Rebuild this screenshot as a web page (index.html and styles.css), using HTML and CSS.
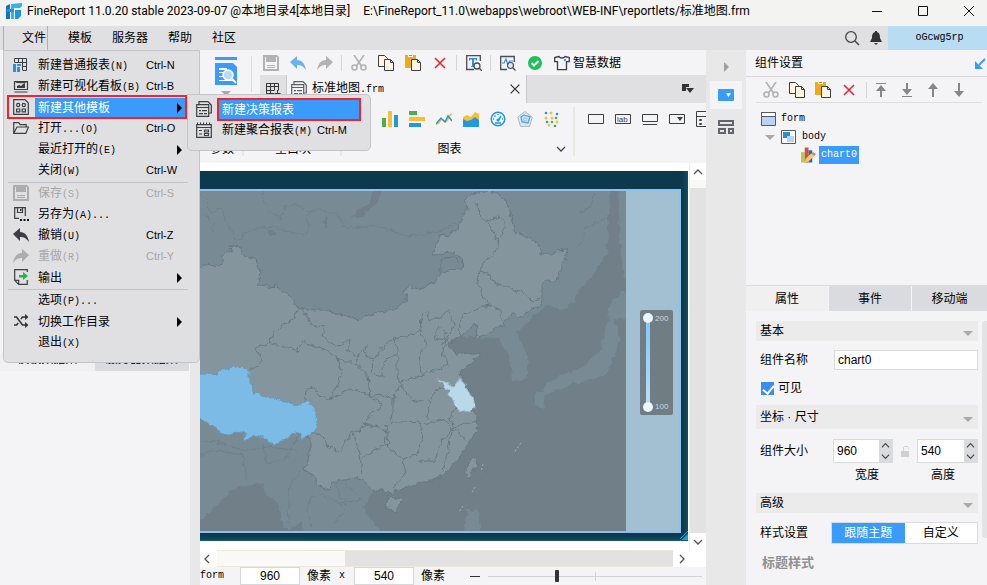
FILE: index.html
```html
<!DOCTYPE html>
<html lang="zh-CN">
<head>
<meta charset="utf-8">
<title>FineReport 11.0.20</title>
<link rel="stylesheet" href="styles.css">
</head>
<body>
<svg class="sprite" aria-hidden="true">
  <symbol id="save" viewBox="0 0 16 16"><path fill="currentColor" fill-rule="evenodd" d="M0 0h14l2 2v14H0zM2 2v12h12V2h-1v5H3V2z"/><path fill="currentColor" d="M8 2h3v3H8zM4 10h8v1H4zM4 12h8v1H4z"/></symbol>
  <symbol id="undo" viewBox="0 0 16 16"><path fill="currentColor" d="M7 1v4c5 0 8 4 9 10-3-4-5-5-9-5v4L0 7z"/></symbol>
  <symbol id="redo" viewBox="0 0 16 16"><path fill="currentColor" d="M9 1v4C4 5 1 9 0 15c3-4 5-5 9-5v4l7-7z"/></symbol>
  <symbol id="cut" viewBox="0 0 16 16"><g fill="none" stroke="currentColor" stroke-width="1.600"><path d="M3 0l7.500 11M13 0L5.500 11"/><circle cx="3.500" cy="12.500" r="2.500"/><circle cx="12.500" cy="12.500" r="2.500"/></g></symbol>
  <symbol id="copy" viewBox="0 0 16 16"><g fill="#fdf6e0" stroke="#3b3e43"><path d="M.5.500h6l3 3v8h-9z"/><path d="M6.500 4.500h6l3 3v8h-9z"/><path d="M12.500 4.500v3h3" fill="none"/></g></symbol>
  <symbol id="paste" viewBox="0 0 16 16"><path fill="#f2a918" d="M0 0h11v13H0z"/><path fill="#fff" d="M3 0h5v2H3z"/><path fill="#d9822b" d="M4 0h3v1H4z"/><path fill="#fdf6e0" stroke="#3b3e43" d="M6.500 4.500h6l3 3v8h-9z"/><path fill="none" stroke="#3b3e43" d="M12.500 4.500v3h3"/></symbol>
  <symbol id="cross" viewBox="0 0 16 16"><path fill="none" stroke="currentColor" stroke-width="1.500" d="M3 3l10 10M13 3L3 13"/></symbol>
  <symbol id="find" viewBox="0 0 16 16"><path fill="none" stroke="#4a4d55" stroke-width="1.300" d="M8 14.500H.7V.7h13.600V6M13 13l3 3"/><path fill="#2f8fe8" d="M3 3h8v2.500h-1V4.500H8V11H9v1H5v-1h1V4.500H4v1H3z"/><circle cx="11" cy="11" r="3" fill="#f4f4f7" stroke="#4a4d55" stroke-width="1.300"/></symbol>
  <symbol id="monitor" viewBox="0 0 16 16"><path fill="none" stroke="#4a4d55" stroke-width="1.300" d="M7 14.500H.7V1.500h13.600V7M13 13l2.500 2.500"/><path fill="none" stroke="#2f8fe8" stroke-width="1.200" d="M2 8h2l2-4 2 6 1.500-4H13"/><circle cx="10.500" cy="10.500" r="3" fill="#dcebf8" stroke="#4a4d55" stroke-width="1.200"/></symbol>
  <symbol id="ok" viewBox="0 0 16 16"><circle cx="8" cy="8" r="7" fill="#1fbf5c"/><path fill="none" stroke="#fff" stroke-width="2" d="M4.500 8l2.500 2.500L11.500 6"/></symbol>
  <symbol id="shirt" viewBox="0 0 16 16"><path fill="none" stroke="#3b3e43" stroke-width="1.300" d="M5 1.500L.7 2.500v4.200H3.500v8h9V6.700h2.800V2.500L11 1.500C10 3.500 6 3.500 5 1.500z"/><path fill="#3a9bfa" d="M10 4h2v2h-2z"/></symbol>
  <symbol id="table" viewBox="0 0 16 16"><path fill="none" stroke="currentColor" d="M1.500 2.500h12v7M1.500 2.500v10H9M1.500 5.500h12M1.500 9.500h8M5.500 2.500v10M9.500 2.500V9M12.500 9v6M9.500 12.500h6"/></symbol>
  <symbol id="newreport" viewBox="0 0 16 16"><path fill="none" stroke="#3b3e43" d="M1.500 5V1.500h12V13.500H10M1.500 5.500h12M5.500 1.500v4M9.500 1.500v12M9 9.500h4.500"/><path fill="#2391e6" d="M0 7h3v8H0zM4 7h4v2H4zM4 10h3v5H4z"/></symbol>
  <symbol id="board" viewBox="0 0 16 16"><path fill="none" stroke="#3b3e43" stroke-width="1.200" d="M1.500 3.500h13v8h-13zM1.500 14h13M2 3.500c2 1.500 10 1.500 12 0"/><path fill="#3b3e43" d="M4 10V8l2-1 2 1 2-2 2-1v5z"/></symbol>
  <symbol id="other" viewBox="0 0 16 16"><path fill="none" stroke="#3b3e43" stroke-width="1.200" d="M.7.700H12L15.300 4v11.300H.7z"/><g fill="none" stroke="#3b3e43" stroke-width="1.200"><circle cx="5.200" cy="6" r="1.600"/><circle cx="10.800" cy="6" r="1.600"/><path d="M3.600 10h3.200v2.800H3.600zM9.200 10h3.200v2.800H9.200z"/></g></symbol>
  <symbol id="open" viewBox="0 0 16 16"><path fill="none" stroke="#3b3e43" stroke-width="1.200" d="M.7 13.300V2.700h5l1.500 2h6V7M.7 13.300L4 7h11.500l-2.700 6.300z"/></symbol>
  <symbol id="saveas" viewBox="0 0 16 16"><path fill="none" stroke="#3b3e43" stroke-width="1.200" d="M6 12.300H1.700V1.700h10.600V10M4.500 2v4.500h5V2"/><path fill="#3b3e43" d="M7 3h1.500v2H7z"/><path fill="#111" d="M7 13h2v2H7zM10.500 13h2v2h-2zM14 13h2v2h-2z"/></symbol>
  <symbol id="export" viewBox="0 0 16 16"><path fill="none" stroke="#3b3e43" stroke-width="1.200" d="M14.300 3V.7H1.700v10.600l4 4h8.600V11M1.700 11.300h4v4"/><path fill="#27b24a" d="M6 6h4V3l5 4-5 4V8.500H6z"/></symbol>
  <symbol id="shuffle" viewBox="0 0 16 16"><path fill="none" stroke="#333" stroke-width="1.600" d="M1 4h2.500l6 8H13M1 12h2.500l1.700-2M8 6l1.500-2H13"/><path fill="#333" d="M12 1l3.500 3L12 7zM12 9l3.500 3-3.500 3z"/></symbol>
  <symbol id="form" viewBox="0 0 16 16"><g fill="none" stroke="currentColor" stroke-width="1.200"><path d="M3 3.500V.7h9L15.300 4v8H13"/><path d="M.7 3.700h12v11.600H.7zM.7 6.500h12"/></g><path fill="currentColor" d="M3 9h2v1.300H3zM6 9h5v1.300H6zM3 12h4v1.300H3zM8 12h3v1.300H8z"/></symbol>
  <symbol id="aggregate" viewBox="0 0 16 16"><path fill="none" stroke="#3b3e43" stroke-width="1.200" d="M.7 2.700h14.600v12.600H.7zM.7 5.500h14.600"/><path stroke="#3b3e43" stroke-dasharray="1 2" stroke-width="2" d="M1 1.500h14"/><path fill="none" stroke="#3b3e43" stroke-width="1.100" d="M3 8.500h3M3 12h3M8.500 8h4v2h-4zM8.500 11.500h4v2h-4z"/></symbol>
  <symbol id="down" viewBox="0 0 10 10"><path fill="none" stroke="currentColor" stroke-width="1.300" d="M1 3l4 4 4-4"/></symbol>
  <symbol id="arrow" viewBox="0 0 16 16"><path fill="none" stroke="currentColor" stroke-width="2" d="M8 15V4"/><path fill="currentColor" d="M8 1l5 6H3z"/></symbol>
  <symbol id="arrowbar" viewBox="0 0 16 16"><path fill="none" stroke="currentColor" stroke-width="2" d="M8 15V6"/><path fill="currentColor" d="M8 3l5 6H3zM3 1h10v1H3z"/></symbol>
</svg>

<header class="titlebar">
  <svg class="logo" viewBox="0 0 16 16"><path fill="#1273c4" d="M0 3L4 1v15H0z"/><path fill="#35b4e8" d="M5 1l11-1v3L14 5H8v11H5z"/><path fill="#1b98dc" d="M9 7h6v6l-3 3H9zM1 6h7v3H1z"/></svg>
  <span>FineReport 11.0.20 stable 2023-09-07 @本地目录4[本地目录]</span>
  <span class="path">E:\FineReport_11.0\webapps\webroot\WEB-INF\reportlets/标准地图.frm</span>
  <div class="winbtns">
    <button aria-label="最小化"><svg viewBox="0 0 12 12"><path d="M1 6.500h10"/></svg></button>
    <button aria-label="最大化"><svg viewBox="0 0 12 12"><path d="M1.500 1.500h9v9h-9z"/></svg></button>
    <button aria-label="关闭"><svg viewBox="0 0 12 12"><path d="M1 1l10 10M11 1L1 11"/></svg></button>
  </div>
</header>

<nav class="menubar">
  <button class="current">文件</button>
  <button>模板</button>
  <button>服务器</button>
  <button>帮助</button>
  <button>社区</button>
  <div class="account">
    <svg class="i16" viewBox="0 0 16 16"><circle cx="7" cy="7" r="5.300" fill="none" stroke="#444" stroke-width="1.300"/><path stroke="#444" stroke-width="1.600" d="M11 11l4 4"/></svg>
    <svg class="i16 bell" viewBox="0 0 16 16"><path fill="#333" d="M7 1h2v1c3 1 3 4 3 6l2 4H2l2-4c0-2 0-5 3-6zM6 13h4l-2 2z"/></svg>
    <a class="user mono" href="#">oGcwg5rp</a>
  </div>
</nav>

<div class="workspace">
  <aside class="data">
    <div class="datatabs"><button>模板数据集</button><button class="off">服务器数据集</button></div>
  </aside>

  <main class="editor">
    <div class="head">
      <button class="preview" aria-label="预览">
        <svg viewBox="0 0 22 28"><path fill="#3a9bfa" d="M0 0h22v3H0zM0 6h18l4 4v18H0z"/><path fill="#fff" d="M4 11h8v2H4zM4 15h6v1H4zM4 19h5v1H4zM4 23h14v1H4z"/><circle cx="13" cy="18" r="5" fill="#b9dcf8" stroke="#fff" stroke-width="1.500"/><path stroke="#fff" stroke-width="2" d="M16 21l5 5"/></svg>
        <span class="tri"></span>
      </button>
      <div class="rows">
        <div class="tools">
          <button class="dim" aria-label="保存"><svg class="i16"><use href="#save"/></svg></button>
          <button class="blue" aria-label="撤销"><svg class="i16"><use href="#undo"/></svg></button>
          <button class="dim" aria-label="重做"><svg class="i16"><use href="#redo"/></svg></button>
          <i class="bar"></i>
          <button class="dim" aria-label="剪切"><svg class="i16"><use href="#cut"/></svg></button>
          <button aria-label="复制"><svg class="i16"><use href="#copy"/></svg></button>
          <button aria-label="粘贴"><svg class="i16"><use href="#paste"/></svg></button>
          <button class="red" aria-label="删除"><svg class="i16"><use href="#cross"/></svg></button>
          <i class="bar"></i>
          <button aria-label="查找"><svg class="i16"><use href="#find"/></svg></button>
          <i class="bar"></i>
          <button aria-label="监控"><svg class="i16"><use href="#monitor"/></svg></button>
          <button aria-label="校验"><svg class="i16"><use href="#ok"/></svg></button>
          <button class="smart"><svg class="i16"><use href="#shirt"/></svg>智慧数据</button>
        </div>
        <div class="filetabs">
          <button class="grid" aria-label="新建"><svg class="i16"><use href="#table"/></svg></button>
          <div class="file"><svg class="i16 formicon"><use href="#form"/></svg><span>标准地图<span class="mono">.frm</span></span>
            <button class="close" aria-label="关闭标签"><svg class="i16"><use href="#cross"/></svg></button></div>
          <button class="list" aria-label="标签列表"><svg viewBox="0 0 12 10"><path fill="#333" d="M0 0h7v3H4v4H0zM4 4h8L8 9z"/></svg></button>
        </div>
      </div>
    </div>
    <div class="ribbon">
      <div class="group g1"><div></div><span>参数</span></div>
      <div class="group g2"><div></div><span>空白块</span></div>
      <div class="group g3">
        <div class="charts">
          <svg viewBox="0 0 16 16"><path fill="#4cae4f" d="M0 7h4v9H0z"/><path fill="#fbc02d" d="M6 0h4v16H6z"/><path fill="#2196e3" d="M12 4h4v12h-4z"/></svg>
          <svg viewBox="0 0 16 16"><path fill="#4cae4f" d="M0 0h8v4H0z"/><path fill="#fbc02d" d="M0 6h16v4H0z"/><path fill="#2196e3" d="M0 12h12v4H0z"/></svg>
          <svg viewBox="0 0 16 16"><path fill="none" stroke="#fbc02d" stroke-width="1.500" d="M0 13c4 1 4-6 7-4s3 3 5-1 2-5 4-5"/><path fill="none" stroke="#2196e3" stroke-width="1.500" d="M0 13l5-6 4 4 3-6 4 5"/></svg>
          <svg viewBox="0 0 16 16"><path fill="#fbc02d" d="M0 6l4-2 4 2 4-5 4 2v8H0z"/><path fill="#2196e3" d="M0 8l4 2 4-1 4-3 4 3v7H0z"/></svg>
          <svg viewBox="0 0 16 16"><circle cx="8" cy="8" r="6.800" fill="#eef7ff" stroke="#2196e3" stroke-width="1.500"/><path fill="none" stroke="#2196e3" stroke-width="1.500" d="M8 10l3-5M5 12h6M3 8h1M12 8h1M8 3v1M4.500 4.500l1 1"/><circle cx="8" cy="9" r="1.500" fill="#2196e3"/></svg>
          <svg viewBox="0 0 16 16"><path fill="#e4e8ec" stroke="#aeb5bb" d="M8 .600l7.300 5.500-2.800 9.300h-9L.7 6.100z"/><path fill="#c4e3f9" stroke="#45aaf0" stroke-width="1.300" d="M7 4l6 2-2 6-6-1-1-5z"/><circle cx="8" cy="8.500" r="1.500" fill="#eee" stroke="#aeb5bb"/></svg>
          <svg viewBox="0 0 16 16"><g fill="#fbc02d"><circle cx="2" cy="7" r="1.500"/><circle cx="7" cy="2" r="1.500"/><circle cx="8" cy="7" r="1.500"/><circle cx="13" cy="11" r="1.500"/><circle cx="5" cy="14" r="1.500"/></g><g fill="#2196e3"><circle cx="2" cy="2" r="1.300"/><circle cx="13" cy="3" r="1.300"/><circle cx="3" cy="11" r="1.300"/><circle cx="11" cy="15" r="1.300"/></g><g fill="#4cae4f"><circle cx="12" cy="7" r="1.300"/><circle cx="8" cy="11" r="1.300"/></g></svg>
        </div>
        <span>图表</span>
        <button class="more" aria-label="更多图表"><svg viewBox="0 0 10 10"><use href="#down"/></svg></button>
      </div>
      <div class="group g4">
        <div class="widgets">
          <svg viewBox="0 0 16 12"><path d="M.5 1.500h15v9H.5z"/></svg>
          <svg viewBox="0 0 16 12"><path d="M.5 1.500h15v9H.5z"/><text x="2" y="9">lab</text></svg>
          <svg viewBox="0 0 16 12"><path d="M.5 1.500h15v7H.5zM1 11.500h14"/></svg>
          <svg viewBox="0 0 16 12"><path d="M.5 1.500h15v9H.5z"/><path class="solid" d="M8 4h6l-3 4z"/></svg>
          <svg class="tall" viewBox="0 0 16 16"><path d="M.5.500h15v15H.5zM.5 5.500h15M3.500 8.500h2v1h-2zM3.500 12.500h2v1h-2z"/></svg>
        </div>
      </div>
    </div>
    <div class="stage">
      <div class="viewport">
        <div class="frame">
          <div class="chart">
            <svg class="map" viewBox="200 191 426 341" preserveAspectRatio="none" role="img" aria-label="中国地图">
              <defs><filter id="coast" x="0" y="0" width="100%" height="100%"><feTurbulence type="fractalNoise" baseFrequency=".16" numOctaves="2" seed="4" result="n"/><feDisplacementMap in="SourceGraphic" in2="n" scale="7" xChannelSelector="R" yChannelSelector="G"/></filter></defs>
              <path fill="#707f88" d="M200 191h426v341H200z"/>
              <g filter="url(#coast)">
                <g fill="#788a94">
                  <path d="M190 180H612L608 217 607 253 593 275 583 285 573 302 563 310 548 305 532 318 517 332 528 358 528 378 512 383 510 358 500 340 380 330 190 340zM618 180h20v110l-14-10 -4-30z"/>
                  <path d="M612 315l8 23-13 37-32 9-30 12v-10l15-10 22-8 18-16 5-22zM612 300l20-12v34l-26-6zM535 392h10l-2 18-8-5zM467 511h10l3 15-2 12h-14z"/>
                  <path d="M190 410l123 25 49 40 18 12-8 8-9 12 7 11 14 22h-77l-5-18-12 10-6-4-6-23-11-10-5-11-30 6-17 19-25 21z"/>
                </g>
                <path fill="#707f88" d="M350 217l8 1 12-8 10-12 3-12h-7l-6 17-15 10zM268 230l5-2 2 5-5 3zM325 218h2v10h-2z"/>
                <g fill="none" stroke="#6f808a" stroke-width="1">
                  <path d="M200 194l7 4 3 15 12-4 4 12 10 20 18-12 18-3 12 5 18 4 8-4 -3-12 6-10 24 5 6 12 20 2 12-3 15 5 20 6 30-5 15-8 12 3"/>
                  <path d="M262 190l5 20 14 9 3-12 12-3 15 10M579 213l10-5 5-15M580 246l5-16 23-14M200 441l25 3 20 8 25-5 25 5M200 456l18-5 25 5 4 25M262 445l5 20 20-8 10-20M288 525l2-40 15-20M312 495l-5 20 5 15M320 495l20 10 22-5M335 487l12 20-12 18M345 485l20 20 12 15M204 215l10 8-2 10"/>
                </g>
                <g fill="#84959d" stroke="#68777f" stroke-width="1">
                  <path d="M190 281l13-16 19 2v-12l8-5 2-5h5l8 12 11 3 4 12-2 13 17 2 15 8 7 14 31 2 30 9 17-7 20-3 12-12-3-6 6-5 12 2 13-7 7-10 13-3 8-5-1-5-10-6-12 2-7 0 7-21 7 2 11-7 2-8 8-13-3-9 8-5 15-3 14 5 8 12 6 26 14 4 9 6 1 10 12 1 6-5 10-1-5 15-8 19-8-3-5 5v13l-1 7-8 4-13 9-8-4-8 9-11 8-18 8 4-13-6-2-11 12-14 8 9 12 8-4 16 4-9 7-12 10 3 8 7 10 6 11-4 9 6 9-1 12-10 13-5 10-10 12-10 10-14 5-20 5-14 6-1 8-3-8-17-3-14-12-27 5-2 8-13-5-5-11-8-5 6-14v-18L190 400z"/>
                  <path d="M472 458l5 2-2 10-6 10-4-8zM393 498l9 2-7 13-10-5 1-7z"/>
                </g>
                <path fill="#788a94" stroke="#68777f" d="M440 259l12-2 10 6 1 5-23 5z"/>
                <g fill="none" stroke="#68777f" stroke-width="1">
                  <path d="M297 309l-2 10-15 8-7 8-3 8-15 6 7 11-4 6-8 4M270 343l15 4 12 4 5-8 10 2 13 5 12 7 5 16-4 12-8 15-12-5-6-8-6 2-1 12"/>
                  <path d="M303 309l6 13 9 7 7-2-3 10 13 10 15-7-2 12 10 6 9-13-2 12 10 1 10-13 10-6 12-2 13-6 1-13 6-5 3 8 11-4 7-7 7 15-8 13-5 8"/>
                  <path d="M338 360l18 4 12 12 2 20-20-8-8 5-12 7M356 364l3-8M374 358l-4 15 12 4 1-14 14-9M395 339l2 13v23l3 10 12 15 18 3 5-13 11-2M420 331l7 14-7 7 2 23-20 7M422 375l20-6 6-8M447 340l-5 14 7 12M434 334l6-8 6 7-2 7-8-1z"/>
                  <path d="M368 376l2 21 12 8-12 10-5 8-5 9-8 0-7 13-5 7-10-4-10-13-7 0M352 432l5 13 3 10 2 20M362 423l23 7 5 15-15 5-13 10M390 423l30-1 3 18-5 15-16 5-17-15 3-20M420 425l25-5 7 10-12 15-5 17h-17M402 460l3 15-12 15M370 397l15-2 8 5v15l-5 8M393 400l9-18M430 403l-3 16M448 450l-5 22M452 432l-4 18M450 420l5 10 10 10M450 420l5-12M452 430l10-5 16-3"/>
                  <path d="M475 203l7 15 5 2 13-3 5 11-5 12-7 15-11 8-2 9 10 3 5 8 20 7 10 5 5 5h10M480 272l-4 8 6 15 8 10 10 5 4 17M490 305l-15 5-13 8-4 12 4 10M488 220l6 14 6 8"/>
                </g>
                <path fill="#7cbbe5" stroke="#6b98b5" d="M190 374l25 1 10-6 13-2 12 3v13l5 10 10 4 22 4 8 6 10-5h5l3 6 4 14-4 13-10 3-8-4-20 12-7-3-1-5-12-1-10 5-1-10-16 4-16-8-24-16z"/>
                <path fill="#b9d9ea" stroke="#9fbccb" d="M438 380l7 3 8 5 5-8 7 3 5 12 6 11-6 6-6 1-9-5-3-10-6-10z"/>
              </g>
              <path fill="none" stroke="#a3b1b8" stroke-dasharray="2 2" d="M483 465l-2 8M475 488l-3 5M463 507l-4 6M515 452l7-10"/>
            </svg>
            <div class="band">
              <div class="scale">
                <div class="track"></div>
                <div class="marks"><span>200</span><span>100</span></div>
              </div>
            </div>
          </div>
          <svg class="corner" viewBox="0 0 10 10"><path fill="#0aa3dc" d="M10 3v7H3z"/><path stroke="#0fb0e4" d="M1 9l9-9"/></svg>
        </div>
        <div class="vscroll">
          <button aria-label="向上"><svg class="flip" viewBox="0 0 10 10"><use href="#down"/></svg></button>
          <div class="gutter"></div>
          <button aria-label="向下"><svg viewBox="0 0 10 10"><use href="#down"/></svg></button>
        </div>
      </div>
      <div class="hscroll">
        <button aria-label="向左"><svg class="left" viewBox="0 0 10 10"><use href="#down"/></svg></button>
        <div class="htrack"><div class="hthumb"></div></div>
        <button aria-label="向右"><svg class="right" viewBox="0 0 10 10"><use href="#down"/></svg></button>
      </div>
    </div>
    <footer class="status">
      <span class="mono name">form</span>
      <input aria-label="宽" value="960"><span class="px">像素</span><span class="mono x">x</span>
      <input aria-label="高" value="540"><span class="px">像素</span>
      <button class="minus" aria-label="缩小"></button>
      <input class="zoom" type="range" min="0" max="100" value="32" aria-label="缩放">
    </footer>
  </main>

  <aside class="rail">
    <button aria-label="收起"><span class="play"></span></button>
    <button class="on" aria-label="组件"><svg viewBox="0 0 16 12"><rect width="16" height="12" rx="1" fill="#3a9bfa"/><path fill="#fff" d="M8 4h5l-2.500 4z"/></svg></button>
    <button aria-label="组件库"><svg viewBox="0 0 16 14"><g fill="none" stroke="#61646d" stroke-width="2"><path d="M1 1h14v4H1zM1 9h6v4H1zM11 9h4v4h-4z"/></g></svg></button>
  </aside>

  <aside class="props">
    <h2>组件设置<svg viewBox="0 0 11 11"><path stroke="#3a9bfa" stroke-width="2" d="M10 1L4 7"/><path fill="#3a9bfa" d="M0 3v8h8z"/></svg></h2>
    <div class="ptools">
      <button class="dim" aria-label="剪切"><svg class="i16"><use href="#cut"/></svg></button>
      <button aria-label="复制"><svg class="i16"><use href="#copy"/></svg></button>
      <button aria-label="粘贴"><svg class="i16"><use href="#paste"/></svg></button>
      <button class="red" aria-label="删除"><svg class="i16"><use href="#cross"/></svg></button>
      <i class="bar"></i>
      <button class="gray" aria-label="置于顶层"><svg class="i16"><use href="#arrowbar"/></svg></button>
      <button class="gray" aria-label="置于底层"><svg class="i16 flip"><use href="#arrowbar"/></svg></button>
      <button class="gray" aria-label="上移一层"><svg class="i16"><use href="#arrow"/></svg></button>
      <button class="gray" aria-label="下移一层"><svg class="i16 flip"><use href="#arrow"/></svg></button>
    </div>
    <ul class="tree mono">
      <li><svg viewBox="0 0 15 14"><path fill="#b9d2f5" stroke="#555b66" d="M.5.500h14v13H.5z"/><path fill="#fff" stroke="#555b66" d="M.5.500h14v4H.5z"/></svg><span>form</span></li>
      <li class="l2"><span class="tri"></span><svg viewBox="0 0 15 14"><path fill="#fff" stroke="#555b66" d="M.5.500h14v13H.5z"/><path fill="#2e8fd0" d="M2 2h7v6H2z"/><path fill="#b9d2f5" d="M6 6h7v6H6z"/></svg><span>body</span></li>
      <li class="l3"><svg class="i16" viewBox="0 0 16 16"><path fill="#b5cc45" d="M0 5h4v11H0z"/><path fill="#e8453c" d="M4 0h4v16H4z"/><path fill="#1a6eb5" d="M8 3h4v13H8z"/><path fill="#fbc56a" d="M5 12l6-6 3 3-6 6-4 1z"/><path fill="#e27a5a" d="M11 6l2-1 3 2-2 2z"/></svg><span class="sel">chart0</span></li>
    </ul>
    <div class="tabs"><button class="on">属性</button><button>事件</button><button>移动端</button></div>
    <div class="body">
      <form class="fields">
        <button type="button" class="section">基本<span class="tri"></span></button>
        <div class="row"><label for="n">组件名称</label><input id="n" class="text" value="chart0"></div>
        <label class="check"><input type="checkbox" checked>可见</label>
        <button type="button" class="section s2">坐标 · 尺寸<span class="tri"></span></button>
        <div class="row size">
          <span class="lbl">组件大小</span>
          <div class="spin"><input id="w" value="960"><div><button type="button" aria-label="增加宽度"><svg class="flip" viewBox="0 0 10 10"><use href="#down"/></svg></button><button type="button" aria-label="减少宽度"><svg viewBox="0 0 10 10"><use href="#down"/></svg></button></div></div>
          <svg class="lock" viewBox="0 0 9 12"><path fill="#d0d0d3" d="M0 6h8v6H0z"/><path fill="none" stroke="#d0d0d3" d="M2.500 6V2.500l1-1h3l1 1V4"/></svg>
          <div class="spin"><input id="h" value="540"><div><button type="button" aria-label="增加高度"><svg class="flip" viewBox="0 0 10 10"><use href="#down"/></svg></button><button type="button" aria-label="减少高度"><svg viewBox="0 0 10 10"><use href="#down"/></svg></button></div></div>
          <label class="cap c1" for="w">宽度</label><label class="cap c2" for="h">高度</label>
        </div>
        <button type="button" class="section s3">高级<span class="tri"></span></button>
        <div class="row style"><span class="lbl">样式设置</span><div class="seg"><button type="button" class="on">跟随主题</button><button type="button">自定义</button></div></div>
        <h3>标题样式</h3>
      </form>
      <div class="pscroll"></div>
    </div>
  </aside>
</div>

<div class="menu file-menu">
  <button><svg class="i16"><use href="#newreport"/></svg><span>新建普通报表<span class="mono">(N)</span></span><kbd>Ctrl-N</kbd></button>
  <button><svg class="i16"><use href="#board"/></svg><span>新建可视化看板<span class="mono">(B)</span></span><kbd>Ctrl-B</kbd></button>
  <button class="hot"><svg class="i16"><use href="#other"/></svg><span>新建其他模板</span><b class="sub"></b></button>
  <button><svg class="i16"><use href="#open"/></svg><span>打开<span class="mono">...(O)</span></span><kbd>Ctrl-O</kbd></button>
  <button><span>最近打开的<span class="mono">(E)</span></span><b class="sub"></b></button>
  <button><span>关闭<span class="mono">(W)</span></span><kbd>Ctrl-W</kbd></button>
  <hr>
  <button disabled><svg class="i16"><use href="#save"/></svg><span>保存<span class="mono">(S)</span></span><kbd>Ctrl-S</kbd></button>
  <button><svg class="i16"><use href="#saveas"/></svg><span>另存为<span class="mono">(A)...</span></span></button>
  <button><svg class="i16"><use href="#undo"/></svg><span>撤销<span class="mono">(U)</span></span><kbd>Ctrl-Z</kbd></button>
  <button disabled><svg class="i16"><use href="#redo"/></svg><span>重做<span class="mono">(R)</span></span><kbd>Ctrl-Y</kbd></button>
  <button><svg class="i16"><use href="#export"/></svg><span>输出</span><b class="sub"></b></button>
  <hr>
  <button><span>选项<span class="mono">(P)...</span></span></button>
  <button><svg class="i16"><use href="#shuffle"/></svg><span>切换工作目录</span><b class="sub"></b></button>
  <button><span>退出<span class="mono">(X)</span></span></button>
</div>
<div class="menu sub-menu">
  <button class="pick"><svg class="i16"><use href="#form"/></svg><span>新建决策报表</span></button>
  <button><svg class="i16"><use href="#aggregate"/></svg><span>新建聚合报表<span class="mono">(M)</span></span><kbd>Ctrl-M</kbd></button>
</div>
</body>
</html>
```
FILE: styles.css
```css
* { box-sizing: border-box; }
body {
  margin: 0;
  height: 100vh;
  display: flex;
  flex-direction: column;
  overflow: hidden;
  position: relative;
  background: #f4f4f7;
  color: #000;
  font: 12px/18px "Liberation Sans", "Noto Sans CJK SC", sans-serif;
}
button, input { font: inherit; color: inherit; margin: 0; padding: 0; border: 0; border-radius: 0; background: none; }
button { display: flex; align-items: center; justify-content: center; white-space: nowrap; }
svg { display: block; flex: none; }
.sprite { position: absolute; width: 0; height: 0; }
.i16 { width: 16px; height: 16px; }
.mono { font-family: "Liberation Mono", "Noto Sans CJK SC", monospace; font-size: 10px; }
.dim { color: #b2b2b5; }
.blue { color: #6db0ee; }
.red { color: #e8212b; }
.gray { color: #87878a; }
.flip { transform: rotate(180deg); }
.left { transform: rotate(90deg); }
.right { transform: rotate(-90deg); }
.bar { width: 1px; height: 16px; background: #d5d5d8; }
.tri { border: 5px solid transparent; border-top-color: #a9a9ac; border-bottom-width: 0; }

.titlebar { flex: none; height: 26px; display: flex; align-items: center; background: #f3f3f1; font-family: Roboto, "Noto Sans CJK SC", sans-serif; padding: 0 0 4px 6px; white-space: nowrap; }
.logo { width: 16px; height: 16px; margin-right: 5px; }
.path { margin-left: 13px; }
.winbtns { margin-left: auto; display: flex; gap: 10px; }
.winbtns button { width: 36px; height: 22px; }
.winbtns svg { width: 12px; height: 12px; fill: none; stroke: #111; }

.menubar { flex: none; height: 24px; display: flex; background: #e0e0e3; padding-left: 3px; }
.menubar > button { padding: 0 10px; }
.menubar > .current { padding: 0 1px 0 18px; border-right: 1px solid #aeb0b5; border-left: 1px solid #aeb0b5; margin-right: 10px; }
.account { margin-left: auto; display: flex; align-items: center; }
.bell { margin: 0 4px 0 8px; }
.user { width: 99px; height: 24px; background: #b8dcf2; color: #000; text-decoration: none; text-align: center; line-height: 24px; padding-left: 4px; }

.workspace { flex: 1; min-height: 0; display: flex; }
.data { width: 200px; flex: none; border-right: 10px solid #e8e8e8; padding-top: 303px; }
.datatabs { display: flex; height: 18px; }
.datatabs button { flex: 1; background: #f0f0f1; padding-bottom: 6px; }
.datatabs .off { background: #dadbdf; margin-right: 1px; }

.editor { flex: 1; min-width: 0; display: flex; flex-direction: column; overflow: hidden; }
.head { flex: none; height: 53px; display: flex; }
.preview { width: 52px; flex: none; flex-direction: column; justify-content: flex-start; padding-top: 7px; gap: 6px; position: relative; }
.preview svg { width: 22px; height: 28px; }
.preview::after { content: ""; position: absolute; right: 0; top: 6px; width: 1px; height: 36px; background: #dcdcdf; }
.rows { flex: 1; min-width: 0; padding-left: 8px; }
.tools { height: 25px; display: flex; align-items: center; gap: 11px; padding-left: 3px; }
.tools .bar { margin: 0 -2px 0 -3px; }
.smart { gap: 3px; }
.filetabs { display: flex; height: 28px; background: #e0e0e2; }
.grid { width: 27px; color: #333; border-right: 1px solid #c8c8cc; }
.file { width: 240px; display: flex; align-items: center; gap: 5px; background: #f4f4f7; padding: 0 4px; border-right: 1px solid #c8c8cc; }
.formicon { color: #5b6068; }
.close { margin-left: auto; color: #333; }
.close svg { width: 14px; height: 14px; }
.list { margin-left: auto; padding-right: 12px; }
.list svg { width: 12px; height: 10px; }

.ribbon { flex: none; height: 60px; display: flex; overflow: hidden; }
.group { display: flex; flex-direction: column; align-items: center; justify-content: space-between; position: relative; flex: none; padding: 8px 0 5px; }
.group::after { content: ""; position: absolute; right: 0; top: 4px; width: 2px; height: 49px; background: #e9e7df; }
.g1 { width: 44px; }
.g2 { width: 98px; }
.g3 { width: 233px; }
.g4 { width: 260px; align-items: flex-start; }
.g3 > span { padding-right: 18px; }
.charts { display: flex; gap: 11px; padding-left: 24px; }
.charts svg { width: 16px; height: 16px; }
.more { position: absolute; right: 9px; bottom: 9px; color: #444; }
.more svg { width: 10px; height: 10px; }
.widgets { display: flex; align-items: center; gap: 11px; padding-left: 13px; }
.widgets svg { width: 16px; height: 12px; fill: none; stroke: #3b3e43; }
.widgets .tall { height: 16px; }
.widgets text { font: 8px "Liberation Sans", sans-serif; fill: #3b3e43; stroke: none; }
.widgets .solid { fill: #3b3e43; stroke: none; }

.stage { flex: 1; min-height: 0; display: flex; flex-direction: column; background: #fff; }
.viewport { flex: 1; min-height: 0; display: flex; justify-content: space-between; }
.frame { flex: 1; margin: 8px 1px 9px 0; background: #0d394c; border-bottom: 1px solid #1e5a72; padding: 18px 7px 7px 0; position: relative; box-shadow: inset -4px -3px 5px -2px #14566c; }
.chart { height: 100%; display: flex; border: 2px solid #8ec0ee; border-left: 0; background: #a2c0d1; }
.map { flex: 1; width: 0; height: 100%; }
.band { width: 53px; flex: none; background: #a2c0d1; padding: 119px 6px 0 14px; }
.scale { height: 105px; background: #707e84; border-radius: 2px; display: flex; padding: 4px 3px; }
.track { width: 4px; margin: 4px 3px; background: linear-gradient(#7ec8fa, #b9defa); position: relative; }
.track::before, .track::after { content: ""; position: absolute; left: -3px; width: 10px; height: 10px; border-radius: 50%; background: #e9f6fe; }
.track::before { top: -5px; }
.track::after { bottom: -5px; }
.marks { display: flex; flex-direction: column; justify-content: space-between; font-size: 8px; line-height: 9px; color: #c3d5df; padding-left: 2px; }
.corner { position: absolute; right: 0; bottom: 0; width: 9px; height: 9px; }
.vscroll { width: 17px; flex: none; display: flex; flex-direction: column; border-left: 1px solid #eee; }
.vscroll button { height: 17px; color: #555; }
.vscroll svg, .hscroll svg { width: 10px; height: 10px; }
.gutter { flex: 1; background: #e2e2e2; border-top: 8px solid #f8f8f6; }
.hscroll { flex: none; height: 17px; display: flex; }
.hscroll button { width: 17px; color: #555; padding-right: 3px; }
.hscroll button:last-child { width: 33px; padding-right: 16px; }
.htrack { flex: 1; background: #e2e2e2; border: 1px solid #ece9dc; border-width: 1px 0; }
.hthumb { width: 28%; height: 100%; background: #f9f9f7; }
.status { flex: none; height: 18px; display: flex; align-items: center; }
.status .name { width: 40px; }
.status input:not(.zoom) { width: 60px; height: 18px; background: #fff; border: 1px solid #d8d8da; text-align: center; }
.px { margin-left: 7px; }
.x { margin: 0 9px 0 8px; }
.minus { width: 10px; height: 1px; background: #333; margin: 0 8px 0 25px; flex: none; }
.zoom { appearance: none; flex: 1; min-width: 0; margin-right: 4px; height: 18px; background: linear-gradient(#d2d2d5, #d2d2d5) 50% 50% / 1px 9px no-repeat, linear-gradient(#d2d2d5, #d2d2d5) 0 50% / 100% 1px no-repeat; }
.zoom::-webkit-slider-thumb { appearance: none; width: 4px; height: 12px; border-radius: 1px; background: #333; }

.rail { width: 40px; flex: none; background: #e8e8e8; display: flex; flex-direction: column; align-items: center; padding: 3px 0 0; }
.rail button { width: 32px; height: 28px; }
.rail svg { width: 16px; }
.rail .on { background: #f4f4f7; margin: 0 0 4px; }
.play { border: 5px solid transparent; border-left-color: #a0a0a2; border-right-width: 0; }

.props { width: 241px; flex: none; display: flex; flex-direction: column; }
.props h2 { margin: 0; flex: none; height: 27px; font: inherit; display: flex; align-items: center; justify-content: space-between; padding: 0 1px 0 9px; border-bottom: 1px solid #d9d9dc; }
.props h2 svg { width: 11px; height: 11px; }
.ptools { flex: none; display: flex; align-items: center; gap: 10px; height: 26px; margin: 0 5px 0 10px; padding-left: 7px; border-bottom: 1px solid #dedee1; }
.ptools .bar { margin: 0 -4px 0 -1px; }
.tree { flex: none; list-style: none; margin: 0; padding: 7px 0 0 15px; height: 182px; }
.tree li { display: flex; align-items: center; height: 18px; gap: 5px; }
.tree svg { width: 15px; }
.tree .l2 { padding-left: 4px; gap: 6px; }
.tree .l3 { padding-left: 40px; gap: 3px; }
.tree .sel { background: #3a9bfa; color: #fff; padding: 0 2px; }
.tabs { flex: none; height: 26px; display: flex; gap: 1px; border-top: 1px solid #d9dade; }
.tabs button { flex: 0 0 34%; background: #dadbdf; }
.tabs button:last-child { flex: 1; }
.tabs .on { background: #f0f0f1; }
.body { flex: 1; min-height: 0; display: flex; padding: 10px 0 0 10px; }
.fields { flex: 1; min-width: 0; }
.pscroll { flex: none; width: 5px; height: 217px; margin-left: 4px; background: #e3e3e6; border-radius: 3px 0 0 3px; }
.section { width: 100%; height: 20px; justify-content: space-between; background: #ebebec; padding: 0 5px 0 4px; margin-bottom: 9px; }
.section .tri { margin-top: 5px; }
.row { display: flex; align-items: center; padding-left: 4px; }
.row label:not(.cap), .lbl { width: 74px; flex: none; }
.text { flex: 1; min-width: 0; height: 20px; background: #fff; border: 1px solid #d9dade; padding: 0 3px; }
.check { display: flex; align-items: center; gap: 4px; padding-left: 5px; margin: 9px 0 8px; }
.check input { appearance: none; width: 13px; height: 13px; background: #3a8fee; position: relative; }
.check input::after { content: ""; position: absolute; left: 4px; top: 1px; width: 5px; height: 9px; border: solid #fff; border-width: 0 2px 2px 0; transform: rotate(40deg); }
.s2 { height: 24px; margin-bottom: 10px; }
.size { display: grid; grid-template-columns: 73px 60px 24px 61px; row-gap: 3px; }
.size .lbl { width: auto; }
.spin { display: flex; height: 24px; border: 1px solid #d9dade; background: #fff; }
.spin input { flex: 1; width: 0; padding-left: 3px; }
.spin > div { width: 13px; background: #dadbdf; display: flex; flex-direction: column; }
.spin button { flex: 1; color: #444; }
.spin svg { width: 9px; height: 9px; }
.lock { width: 9px; height: 12px; justify-self: center; }
.cap { text-align: center; padding-left: 8px; }
.c1 { grid-column: 2; }
.c2 { grid-column: 4; padding: 0 9px 0 0; }
.s3 { margin: 9px 0; }
.seg { flex: 1; display: flex; height: 22px; border: 1px solid #d9dade; background: #fff; margin-left: -3px; }
.seg button { flex: 1; }
.seg .on { background: #3a9bfa; color: #fff; }
.fields h3 { margin: 9px 0 0 6px; font-size: 13px; line-height: 20px; font-weight: 700; color: #909093; }

.menu { position: absolute; background: #e0e0e3; border: 1px solid #c3c4c9; border-radius: 0 0 5px 5px; }
.menu button { width: 100%; height: 21px; justify-content: flex-start; position: relative; padding-left: 34px; }
.menu .i16 { position: absolute; left: 9px; top: 2px; color: #3b3e43; }
.menu button:disabled { color: #a6a6a8; }
.menu button:disabled .i16 { color: #acacaf; }
.menu kbd { font: 11px/18px "Liberation Sans", sans-serif; position: absolute; left: 142px; top: 1px; }
.menu hr { height: 1px; border: 0; background: #c3c4c9; margin: 1px 11px 0 4px; }
.sub { position: absolute; right: 17px; border: 5px solid transparent; border-left-color: #000; border-right-width: 0; }
.file-menu { left: 3px; top: 50px; width: 197px; padding: 4px 0 9px; }
.file-menu .hot { color: #fff; }
.hot::before { content: ""; position: absolute; left: 31px; right: 13px; top: 1px; bottom: 1px; background: #3a9bfa; }
.hot span { position: relative; }
.hot::after { content: ""; position: absolute; left: 3px; right: 12px; top: -2px; bottom: -1px; border: 2px solid #f5222d; }
.sub-menu { left: 187px; top: 94px; width: 184px; padding: 4px 0 9px; border-radius: 0 5px 5px 5px; }
.sub-menu button { padding-left: 34px; }
.sub-menu .i16 { left: 8px; }
.sub-menu kbd { left: 129px; }
.pick { color: #fff; }
.pick::before { content: ""; position: absolute; left: 29px; right: 9px; top: -1px; bottom: -1px; background: #3a9bfa; border: 2px solid #f5222d; }
.pick span { position: relative; }
```
